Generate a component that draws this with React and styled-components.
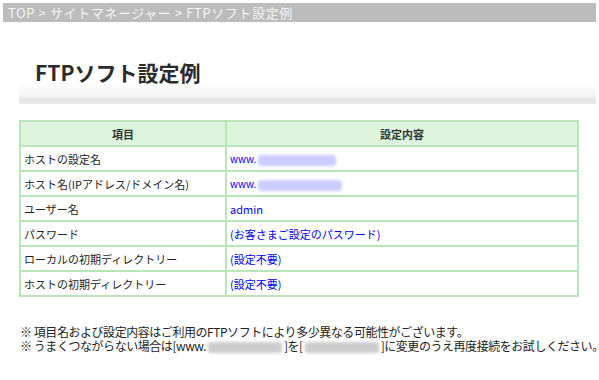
import React from 'react'
import styled, { createGlobalStyle } from 'styled-components'

const Global = createGlobalStyle`
  html, body { margin: 0; padding: 0; background: #fff; }
  body {
    font-family: "Noto Sans CJK JP", "Liberation Sans", sans-serif;
    font-size: 12px;
    color: #222;
  }
`

const Page = styled.div`
  width: 599px;
  height: 380px;
  padding: 3px 3px 0 3px;
  box-sizing: border-box;
`

const Crumbs = styled.div`
  height: 19px;
  background: #bcbcbc;
  color: #f4f4f4;
  font-size: 13px;
  letter-spacing: 0.6px;
  line-height: 19px;
  padding-left: 5px;
`

const TitleBand = styled.div`
  margin: 37px 0 0 16px;
  height: 45px;
  display: flex;
  align-items: flex-start;
  background: linear-gradient(to bottom, #fff 0%, #fff 55%, #f2f2f2 86%, #e4e4e4 86%, #e8e8e8 100%);
`

const Title = styled.h1`
  margin: 0 0 0 16px;
  font-size: 21px;
  font-weight: bold;
  color: #2b2b2b;
  line-height: 26px;
`

const Table = styled.table`
  margin: 16px 0 0 16px;
  width: 560px;
  border-collapse: collapse;
  font-size: 11px;
`

const Head = styled.th`
  background: #dcf5dc;
  border: 2px solid #b8e6b8;
  height: 23px;
  padding: 0;
  font-weight: bold;
  color: #333;
  width: ${p => p.$w || 'auto'};
`

const Cell = styled.td`
  border: 2px solid #b8e6b8;
  height: 23px;
  padding: 0 0 0 3px;
  color: ${p => (p.$value ? '#0000ee' : '#222')};
  font-size: ${p => (p.$small ? '10px' : '11px')};
  white-space: nowrap;
`

const Blur = styled.span`
  display: inline-block;
  vertical-align: middle;
  width: ${p => p.$w}px;
  height: 11px;
  margin: 0 2px;
  background: ${p => p.$tone || 'rgba(160,160,255,0.55)'};
  filter: blur(1.5px);
  border-radius: 3px;
`

const Notes = styled.div`
  margin: 28px 0 0 17px;
  font-size: 12px;
  letter-spacing: -0.45px;
  line-height: 14px;
  color: #222;
  white-space: nowrap;
`

const rows = [
  ['ホストの設定名', <><span>www.</span><Blur $w={78} /></>, true],
  ['ホスト名(IPアドレス/ドメイン名)', <><span>www.</span><Blur $w={84} /></>, true],
  ['ユーザー名', 'admin'],
  ['パスワード', '(お客さまご設定のパスワード)'],
  ['ローカルの初期ディレクトリー', '(設定不要)'],
  ['ホストの初期ディレクトリー', '(設定不要)']
]

export default function App() {
  return (
    <>
      <Global />
      <Page>
        <Crumbs>TOP &gt; サイトマネージャー &gt; FTPソフト設定例</Crumbs>
        <TitleBand>
          <Title>FTPソフト設定例</Title>
        </TitleBand>
        <Table>
          <thead>
            <tr>
              <Head $w="204px">項目</Head>
              <Head>設定内容</Head>
            </tr>
          </thead>
          <tbody>
            {rows.map(([k, v, small]) => (
              <tr key={k}>
                <Cell>{k}</Cell>
                <Cell $value $small={small}>{v}</Cell>
              </tr>
            ))}
          </tbody>
        </Table>
        <Notes>
          <div>※ 項目名および設定内容はご利用のFTPソフトにより多少異なる可能性がございます。</div>
          <div>
            ※ うまくつながらない場合は[www.<Blur $w={74} $tone="rgba(170,170,170,0.6)" />]を[<Blur $w={74} $tone="rgba(170,170,170,0.6)" />]に変更のうえ再度接続をお試しください。
          </div>
        </Notes>
      </Page>
    </>
  )
}
